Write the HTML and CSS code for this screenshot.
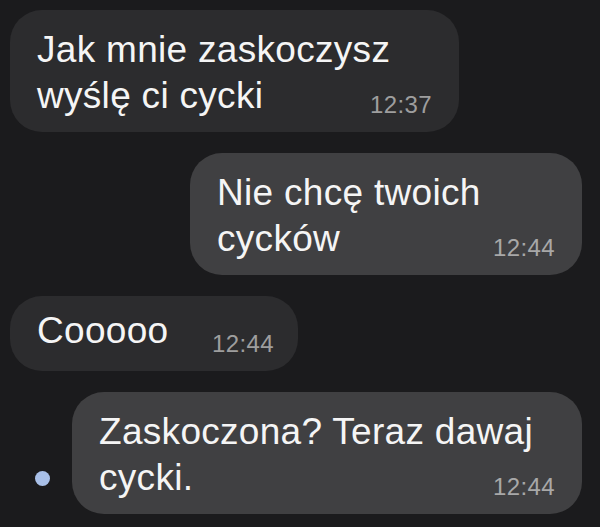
FILE: index.html
```html
<!DOCTYPE html>
<html lang="pl">
<head>
<meta charset="utf-8">
<title>Czat</title>
<link rel="stylesheet" href="styles.css">
</head>
<body>
<main class="chat">
  <div class="row row-in">
    <div class="bubble bubble-in b1">
      <p class="text">Jak mnie zaskoczysz</p>
      <div class="last">
        <p class="text">wyślę ci cycki</p>
        <span class="time">12:37</span>
      </div>
    </div>
  </div>
  <div class="row row-out">
    <div class="bubble bubble-out b2">
      <p class="text">Nie chcę twoich</p>
      <div class="last">
        <p class="text">cycków</p>
        <span class="time">12:44</span>
      </div>
    </div>
  </div>
  <div class="row row-in">
    <div class="bubble bubble-in b3">
      <div class="last">
        <p class="text">Cooooo</p>
        <span class="time">12:44</span>
      </div>
    </div>
  </div>
  <div class="row row-out">
    <span class="dot"></span>
    <div class="bubble bubble-out b4">
      <p class="text">Zaskoczona? Teraz dawaj</p>
      <div class="last">
        <p class="text">cycki.</p>
        <span class="time">12:44</span>
      </div>
    </div>
  </div>
</main>
</body>
</html>
```

FILE: styles.css
```css
html, body {
  margin: 0;
  padding: 0;
  background: #1b1b1d;
}

body {
  width: 600px;
  height: 527px;
  overflow: hidden;
  font-family: "Liberation Sans", Arial, sans-serif;
}

.chat {
  display: flex;
  flex-direction: column;
  gap: 21px;
  padding: 10px 18px 0 10px;
}

.row {
  display: flex;
}

.row-in {
  justify-content: flex-start;
}

.row-out {
  justify-content: flex-end;
  align-items: flex-end;
  gap: 22px;
}

.bubble {
  box-sizing: border-box;
  display: flex;
  flex-direction: column;
  padding: 17px 27px 13px 27px;
  border-radius: 32px;
}

.bubble-in {
  background: #2c2c2e;
}

.bubble-out {
  background: #404042;
}

.text {
  margin: 0;
  color: #f5f5f5;
  font-size: 37px;
  line-height: 46px;
  letter-spacing: 0.3px;
  white-space: nowrap;
}

.last {
  display: flex;
  justify-content: space-between;
  align-items: flex-end;
  gap: 20px;
}

.time {
  font-size: 24px;
  line-height: 28px;
  letter-spacing: 0.4px;
  color: #9e9e9e;
}

.bubble-out .time {
  color: #a8a8a8;
}

.b1 { width: 449px; }
.b2 { width: 392px; }
.b3 {
  width: 288px;
  padding-top: 12px;
  padding-right: 24px;
  padding-bottom: 17px;
}
.b3 .time { margin-bottom: -4px; }
.b4 { width: 510px; }

.dot {
  width: 15px;
  height: 15px;
  border-radius: 50%;
  background: #a9c0e8;
  margin-bottom: 28px;
  flex: none;
}
```
